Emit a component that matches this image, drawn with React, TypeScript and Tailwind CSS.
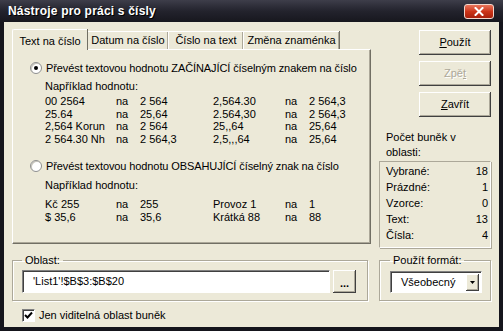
import React from 'react';

const rowsA = [
  ['00 2564', 'na', '2 564', '2,564.30', 'na', '2 564,3'],
  ['25.64', 'na', '25,64', '2.564,30', 'na', '2 564,3'],
  ['2,564 Korun', 'na', '2 564', '25,,64', 'na', '25,64'],
  ['2 564.30 Nh', 'na', '2 564,3', '2,5,,,64', 'na', '25,64'],
];

const rowsB = [
  ['Kč 255', 'na', '255', 'Provoz 1', 'na', '1'],
  ['$ 35,6', 'na', '35,6', 'Krátká 88', 'na', '88'],
];

const stats = [
  ['Vybrané:', '18'],
  ['Prázdné:', '1'],
  ['Vzorce:', '0'],
  ['Text:', '13'],
  ['Čísla:', '4'],
];

function Radio({ checked }: { checked?: boolean }) {
  return (
    <span className="w-[12px] h-[12px] rounded-full bg-white border border-[#8e8f8f] shadow-[inset_1px_1px_0_#c8c6bc] flex items-center justify-center shrink-0">
      {checked && <span className="w-[4px] h-[4px] rounded-full bg-black" />}
    </span>
  );
}

function Examples({ rows }: { rows: string[][] }) {
  return (
    <div className="grid grid-cols-[71px_24px_73px_72px_24px_auto] leading-[12.5px] pl-[32px]">
      {rows.map((r, i) =>
        r.map((c, j) => <span key={i + '-' + j}>{c}</span>)
      )}
    </div>
  );
}

function Button({ children, disabled }: { children: React.ReactNode; disabled?: boolean }) {
  return (
    <button
      className={
        disabled
          ? 'w-[72px] h-[25px] bg-[#ece9d8] text-[#aca899] [text-shadow:1px_1px_0_#fff] shadow-[inset_-1px_-1px_0_#404040,inset_1px_1px_0_#fff,inset_-2px_-2px_0_#aca899]'
          : 'w-[72px] h-[25px] bg-[#ece9d8] text-black shadow-[inset_-1px_-1px_0_#404040,inset_1px_1px_0_#fff,inset_-2px_-2px_0_#aca899]'
      }
    >
      {children}
    </button>
  );
}

export default function App() {
  return (
    <div className="w-[503px] h-[331px] flex flex-col bg-[#15151c] font-['Liberation_Sans',Arial,sans-serif] text-[11px] text-black">
      {/* title bar */}
      <div className="h-[22px] shrink-0 flex items-center justify-between pl-[8px] pr-[9px] bg-gradient-to-b from-[#3e3e4a] via-[#23232d] to-[#17171e]">
        <span className="text-white font-bold text-[12px] tracking-[0.2px] [text-shadow:1px_1px_0_#000]">Nástroje pro práci s čísly</span>
        <span className="w-[30px] h-[15px] rounded-[3px] border border-[#f3d6cc] bg-gradient-to-b from-[#e8735a] via-[#cc3418] to-[#a8200c] flex items-center justify-center">
          <svg width="10" height="9" viewBox="0 0 10 9">
            <path d="M1.5 1 L8.5 8 M8.5 1 L1.5 8" stroke="#fff" strokeWidth="2" strokeLinecap="square" />
          </svg>
        </span>
      </div>

      {/* body */}
      <div className="flex-1 mx-[4px] mb-[4px] bg-[#ece9d8] flex flex-col px-[8px] pt-[7px]">
        <div className="flex h-[219px]">
          {/* left: tabs */}
          <div className="w-[359px] flex flex-col">
            <div className="flex items-end h-[20px]">
              <div className="relative z-10 -mb-px w-[75px] h-[21px] bg-[#ece9d8] border-l border-t border-white rounded-tl-[2px] shadow-[1px_0_0_#716f64] flex items-start justify-center pt-[3px]">
                Text na číslo
              </div>
              <div className="w-[81px] h-[18px] border-l border-t border-white shadow-[inset_-1px_0_0_#aca899,1px_0_0_#716f64] flex items-center justify-center">
                Datum na číslo
              </div>
              <div className="w-[75px] h-[18px] border-l border-t border-white shadow-[inset_-1px_0_0_#aca899,1px_0_0_#716f64] flex items-center justify-center">
                Číslo na text
              </div>
              <div className="w-[96px] h-[18px] border-l border-t border-white shadow-[inset_-1px_0_0_#aca899,1px_0_0_#716f64] flex items-center justify-center">
                Změna znaménka
              </div>
            </div>
            <div className="h-[195px] border-t border-l border-white border-r border-b border-r-[#716f64] border-b-[#716f64] shadow-[inset_-1px_-1px_0_#aca899] pt-[11px]">
              <div className="flex items-center h-[14px] pl-[17px] gap-[4px]">
                <Radio checked />
                <span className="tracking-[-0.1px]">Převést textovou hodnotu ZAČÍNAJÍCÍ číselným znakem na číslo</span>
              </div>
              <div className="mt-[4px] h-[14px] leading-[14px] pl-[32px]">Například hodnotu:</div>
              <div className="mt-[2px]">
                <Examples rows={rowsA} />
              </div>
              <div className="flex items-center h-[14px] pl-[17px] gap-[4px] mt-[14px]">
                <Radio />
                <span className="tracking-[-0.1px]">Převést textovou hodnotu OBSAHUJÍCÍ číselný znak na číslo</span>
              </div>
              <div className="mt-[5px] h-[14px] leading-[14px] pl-[32px]">Například hodnotu:</div>
              <div className="mt-[6px]">
                <Examples rows={rowsB} />
              </div>
            </div>
          </div>

          {/* right column */}
          <div className="ml-[8px] w-[112px] flex flex-col">
            <div className="flex flex-col items-end gap-[6px] pt-[1px]">
              <Button>
                <span className="underline">P</span>oužít
              </Button>
              <Button disabled>
                Zpě<span className="underline">t</span>
              </Button>
              <Button>
                <span className="underline">Z</span>avřít
              </Button>
            </div>
            <div className="mt-[13px] pl-[7px] leading-[15px]">
              Počet buněk v<br />oblasti:
            </div>
            <div className="mt-[1px] border border-t-[#aca899] border-l-[#aca899] border-r-white border-b-white shadow-[1px_1px_0_#aca899] pt-[1px] pb-[4px] pl-[6px] pr-[2px]">
              {stats.map(([k, v]) => (
                <div key={k} className="flex justify-between h-[16px] items-center">
                  <span>{k}</span>
                  <span>{v}</span>
                </div>
              ))}
            </div>
          </div>
        </div>

        {/* bottom row */}
        <div className="flex mt-[7px]">
          <fieldset className="w-[356px] border border-[#aca899] shadow-[1px_1px_0_#fff,inset_1px_1px_0_#fff] pl-[9px] pr-[11px] pb-[6px]">
            <legend className="px-[3px] leading-[10px]">Oblast:</legend>
            <div className="flex mt-[5px] gap-[3px]">
              <div className="flex-1 h-[23px] bg-white border border-t-[#808080] border-l-[#808080] border-r-white border-b-white shadow-[inset_1px_1px_0_#404040] flex items-center pl-[10px]">
                'List1'!$B$3:$B$20
              </div>
              <div className="w-[23px] h-[23px] bg-[#ece9d8] shadow-[inset_-1px_-1px_0_#404040,inset_1px_1px_0_#fff,inset_-2px_-2px_0_#aca899] flex items-end justify-center pb-[7px] font-bold leading-[6px]">
                ...
              </div>
            </div>
          </fieldset>
          <fieldset className="ml-[11px] w-[112px] border border-[#aca899] shadow-[1px_1px_0_#fff,inset_1px_1px_0_#fff] pl-[10px] pr-[8px] pb-[7px]">
            <legend className="px-[3px] leading-[10px]">Použít formát:</legend>
            <div className="mt-[6px] h-[22px] bg-white border border-t-[#808080] border-l-[#808080] border-r-white border-b-white shadow-[inset_1px_1px_0_#404040] flex items-center pl-[10px] pr-[2px]">
              <span className="flex-1">Všeobecný</span>
              <span className="w-[13px] h-[17px] bg-[#ece9d8] shadow-[inset_-1px_-1px_0_#404040,inset_1px_1px_0_#fff,inset_-2px_-2px_0_#aca899] flex items-center justify-center">
                <svg width="5" height="3" viewBox="0 0 5 3">
                  <path d="M0 0 H5 L2.5 3 Z" fill="#000" />
                </svg>
              </span>
            </div>
          </fieldset>
        </div>

        <div className="flex items-center mt-[6px] pl-[10px] gap-[4px]">
          <span className="w-[13px] h-[13px] bg-white border border-t-[#808080] border-l-[#808080] border-r-white border-b-white shadow-[inset_1px_1px_0_#404040] flex items-center justify-center">
            <svg width="9" height="9" viewBox="0 0 9 9">
              <path d="M1 4 L3.5 6.5 L8 1.5" stroke="#000" strokeWidth="2" fill="none" />
            </svg>
          </span>
          <span>Jen viditelná oblast buněk</span>
        </div>
      </div>
    </div>
  );
}
